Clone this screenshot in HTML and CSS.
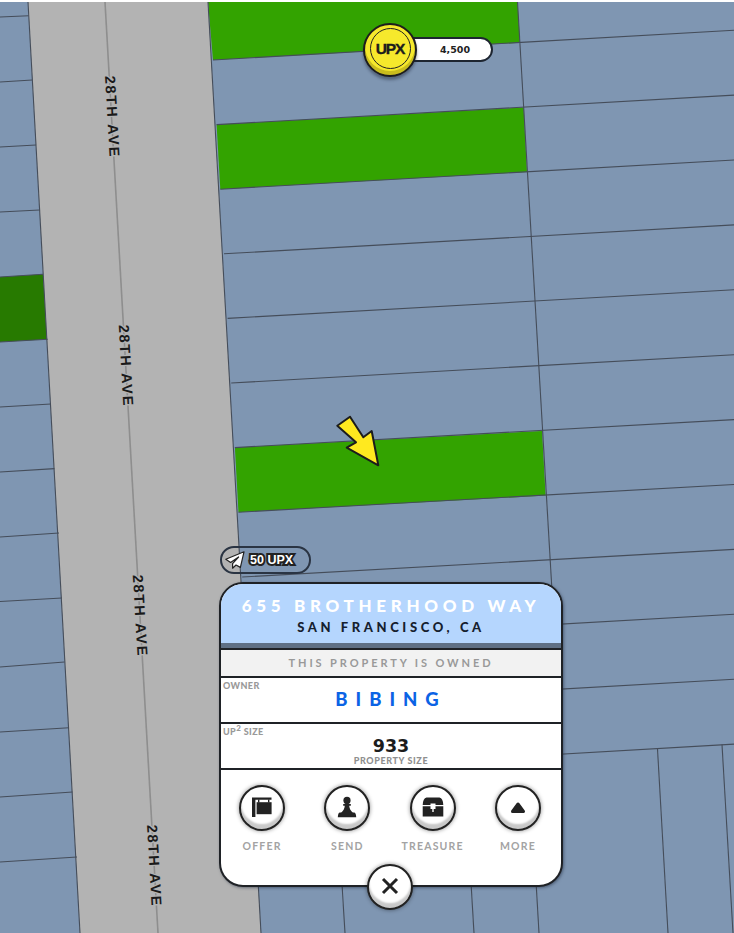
FILE: index.html
```html
<!DOCTYPE html>
<html lang="en">
<head>
  <meta charset="UTF-8" />
  <meta name="viewport" content="width=device-width, initial-scale=1.0"/>
  <title>655 Brotherhood Way</title>
  <link rel="stylesheet" href="styles.css">
</head>
<body>
  <div class="stage">
    <!-- map -->
    <svg class="map" viewBox="0 0 734 933" width="734" height="933">
      <rect class="lot" x="0" y="2" width="734" height="931"/>
      <polygon class="lot-green" points="208,2 517.5,2 520,42.7 213,60"/>
      <polygon class="lot-green" points="216.6,124.6 523.6,107.4 527,172 220.3,189.2"/>
      <polygon class="lot-green" points="234.9,447.6 542,431 545.6,495.6 238.5,512.2"/>
      <polygon class="lot-dark" points="0,277 43,274.3 47.7,339.3 0,342"/>
      <polygon class="road" points="28,2 208,2 261,933 80,933"/>
      <g class="lot-line">
        <line x1="213" y1="60" x2="734" y2="30.2"/>
        <line x1="216.6" y1="124.6" x2="734" y2="95.1"/>
        <line x1="220.3" y1="189.2" x2="734" y2="160"/>
        <line x1="224" y1="253.8" x2="734" y2="224.9"/>
        <line x1="227.6" y1="318.4" x2="734" y2="289.8"/>
        <line x1="231.2" y1="383" x2="734" y2="354.7"/>
        <line x1="234.9" y1="447.6" x2="734" y2="419.6"/>
        <line x1="238.5" y1="512.2" x2="734" y2="484.5"/>
        <line x1="242.2" y1="577" x2="734" y2="549.4"/>
        <line x1="245.9" y1="642" x2="734" y2="614.3"/>
        <line x1="249.5" y1="707" x2="734" y2="679.2"/>
        <line x1="253.2" y1="772" x2="734" y2="744.1"/>
        <line x1="517.5" y1="2" x2="561.5" y2="753"/>
        <line x1="208" y1="2" x2="261" y2="933"/>
        <line x1="28" y1="2" x2="80" y2="933"/>
        <line x1="0" y1="17" x2="28.7" y2="15.7"/>
        <line x1="0" y1="82" x2="32.2" y2="80"/>
        <line x1="0" y1="147" x2="36" y2="145"/>
        <line x1="0" y1="212" x2="39.5" y2="210"/>
        <line x1="0" y1="277" x2="43" y2="274.3"/>
        <line x1="0" y1="342" x2="47.7" y2="339.3"/>
        <line x1="0" y1="407" x2="51" y2="404"/>
        <line x1="0" y1="472" x2="54.5" y2="468.6"/>
        <line x1="0" y1="537" x2="59" y2="533"/>
        <line x1="0" y1="601.5" x2="62" y2="598"/>
        <line x1="0" y1="667" x2="64.5" y2="662"/>
        <line x1="0" y1="732" x2="69" y2="727.7"/>
        <line x1="0" y1="797" x2="72.5" y2="792"/>
        <line x1="0" y1="862" x2="77" y2="857"/>
        <line x1="335" y1="770" x2="345" y2="933"/>
        <line x1="464" y1="765" x2="474" y2="933"/>
        <line x1="529" y1="760" x2="539" y2="933"/>
        <line x1="657.5" y1="749" x2="668" y2="933"/>
        <line x1="722" y1="744.5" x2="733" y2="933"/>
      </g>
      <line class="street-line" x1="105" y1="2" x2="158" y2="933"/>
      <g class="street-names">
        <text transform="translate(112.4 117) rotate(86.75)">28TH AVE</text>
        <text transform="translate(126 366) rotate(86.75)">28TH AVE</text>
        <text transform="translate(140.2 616) rotate(86.75)">28TH AVE</text>
        <text transform="translate(154.4 866) rotate(86.75)">28TH AVE</text>
      </g>
      <polygon class="pointer" points="337.3,425.7 350,416.7 363.3,437.3 371.7,431 378.3,465.3 346.7,447.7 356,442.3"/>
    </svg>

    <!-- balance -->
    <div class="balance">
      <div class="coin"><span class="coin-ring">UPX</span></div>
      <div class="balance-amount">4,500</div>
    </div>

    <!-- send fee -->
    <div class="fee">
      <svg class="fee-icon" viewBox="0 0 20 18" width="20" height="18">
        <path d="M19 .8 L.8 8.2 L5.6 11.4 L13.6 6 L7.6 12.6 L7.6 17.2 L11 14 L15.4 16.4 Z"/>
      </svg>
      <span class="fee-text">50 UPX</span>
    </div>

    <!-- property card -->
    <div class="card">
      <div class="card-head">
        <div class="street">655 BROTHERHOOD WAY</div>
        <div class="city">SAN FRANCISCO, CA</div>
      </div>
      <div class="status">THIS PROPERTY IS OWNED</div>
      <div class="info">
        <div class="info-label">OWNER</div>
        <div class="owner-name">BIBING</div>
      </div>
      <div class="info">
        <div class="info-label">UP<sup>2</sup> SIZE</div>
        <div class="size-value">933</div>
        <div class="size-label">PROPERTY SIZE</div>
      </div>
      <div class="actions">
        <div class="action">
          <div class="round-btn">
            <svg viewBox="0 0 22 22" width="22" height="22">
              <path d="M1 1.5h19.5v2.2H4.4V21H1z"/>
              <path d="M7 3.5h1.4v3H7zM17 3.5h1.4v3H17z"/>
              <rect x="5.6" y="6.2" width="15" height="12"/>
            </svg>
          </div>
          <div class="action-label">OFFER</div>
        </div>
        <div class="action">
          <div class="round-btn">
            <svg viewBox="0 0 22 22" width="22" height="22">
              <circle cx="11" cy="4.4" r="3.6"/>
              <path d="M7.2 8h7.6v1.8h-1.6c.2 3 1.6 5 3.8 7.2H5c2.2-2.2 3.6-4.2 3.8-7.2H7.2z"/>
              <path d="M3.6 16.6h14.8q1.6.6 1.8 4.6H1.8q.2-4 1.8-4.6z"/>
            </svg>
          </div>
          <div class="action-label">SEND</div>
        </div>
        <div class="action">
          <div class="round-btn">
            <svg viewBox="0 0 22 22" width="22" height="22">
              <path d="M4.5 1.5h13q3.5.5 3.8 7.5H13.5V7.4h-5V9H.7Q1 2 4.5 1.5z"/>
              <path d="M.7 10.3h7.8v2.7h1.8v3h1.4v-3h1.8v-2.7h7.8v10.2H.7z"/>
            </svg>
          </div>
          <div class="action-label">TREASURE</div>
        </div>
        <div class="action">
          <div class="round-btn">
            <svg viewBox="0 0 22 22" width="22" height="22">
              <path class="more-up" d="M11 8 L16.5 15.5 H5.5 Z"/>
            </svg>
          </div>
          <div class="action-label">MORE</div>
        </div>
      </div>
      <div class="round-btn close-btn">
        <svg viewBox="0 0 22 22" width="22" height="22">
          <path class="close-x" d="M4 4 L18 18 M18 4 L4 18"/>
        </svg>
      </div>
    </div>
  </div>
</body>
</html>
```

FILE: styles.css
```css
body {
  margin: 0;
  background: #fff;
  font-family: 'Lato', 'Liberation Sans', sans-serif;
}
.stage {
  position: relative;
  width: 734px;
  height: 933px;
  overflow: hidden;
}
.map {
  position: absolute;
  top: 0;
  left: 0;
}
.lot { fill: #7f96b2; }
.lot-green { fill: #33a300; }
.lot-dark { fill: #277a00; }
.road { fill: #b3b3b3; }
.lot-line line {
  stroke: #454d5a;
  stroke-width: 1.1;
}
.street-line {
  stroke: #8e8e8e;
  stroke-width: 1.6;
}
.street-names text {
  font-family: 'Liberation Sans', sans-serif;
  font-size: 14.5px;
  font-weight: bold;
  letter-spacing: 1.9px;
  text-anchor: middle;
  dominant-baseline: central;
  fill: #1a1a1a;
  stroke: #b3b3b3;
  stroke-width: 2.5px;
  paint-order: stroke fill;
}
.pointer {
  fill: #ffe91f;
  stroke: #1c1c1c;
  stroke-width: 2;
  stroke-linejoin: round;
}

/* balance */
.balance {
  position: absolute;
  top: 23px;
  left: 363px;
  display: flex;
  align-items: center;
}
.coin {
  position: relative;
  z-index: 1;
  box-sizing: border-box;
  width: 54px;
  height: 54px;
  display: flex;
  justify-content: center;
  padding-top: 3px;
  border: 2px solid #1d1d1d;
  border-radius: 50%;
  background: #f6e92c;
  box-shadow: inset 0 -4px 0 #c9bc1e, 0 3px 3px rgba(30,40,60,0.45);
}
.coin-ring {
  box-sizing: border-box;
  width: 41px;
  height: 41px;
  display: flex;
  align-items: center;
  justify-content: center;
  border: 1.5px solid #222;
  border-radius: 50%;
  font-family: 'Liberation Sans', sans-serif;
  font-size: 15.5px;
  font-weight: bold;
  letter-spacing: -1.2px;
  color: #1c1c1c;
  -webkit-text-stroke: 0.4px #1c1c1c;
}
.balance-amount {
  box-sizing: border-box;
  width: 84px;
  height: 25px;
  margin-left: -8px;
  margin-bottom: 1px;
  padding-left: 8px;
  display: flex;
  align-items: center;
  justify-content: center;
  border: 2px solid #1d2530;
  border-radius: 0 13px 13px 0;
  background: #fff;
  font-family: 'DejaVu Sans', sans-serif;
  font-size: 9.5px;
  font-weight: bold;
  color: #222;
}

/* send fee */
.fee {
  position: absolute;
  top: 546px;
  left: 220px;
  box-sizing: border-box;
  width: 91px;
  height: 28px;
  padding-left: 3px;
  display: flex;
  align-items: center;
  gap: 5px;
  border: 2px solid #2a3443;
  border-radius: 14px;
}
.fee-icon path {
  fill: #fff;
  stroke: #222;
  stroke-width: 1.2;
  stroke-linejoin: round;
}
.fee-text {
  font-family: 'Liberation Sans', sans-serif;
  font-size: 12.5px;
  font-weight: bold;
  color: #fff;
  -webkit-text-stroke: 4px #222;
  paint-order: stroke fill;
}

/* card */
.card {
  position: absolute;
  top: 582px;
  left: 219px;
  box-sizing: border-box;
  width: 344px;
  height: 305px;
  border: 2px solid #1f2226;
  border-radius: 24px;
  background: #fff;
  box-shadow: 1px 1px 3px rgba(30,40,60,0.5);
}
.card-head {
  box-sizing: border-box;
  height: 66px;
  padding-top: 12px;
  border-radius: 22px 22px 0 0;
  border-bottom: 2px solid #1f2226;
  background: #b5d6fe;
  box-shadow: inset 0 -5px 0 #5f7085;
  text-align: center;
}
.street {
  font-size: 17px;
  font-weight: 900;
  line-height: 20px;
  letter-spacing: 4.67px;
  color: #fff;
}
.city {
  margin-top: 1px;
  font-size: 13px;
  font-weight: 900;
  line-height: 20px;
  letter-spacing: 3.6px;
  color: #16202e;
}
.status {
  height: 26px;
  border-bottom: 2px solid #1f2226;
  background: #f2f2f2;
  font-size: 11px;
  font-weight: bold;
  line-height: 26px;
  letter-spacing: 2.9px;
  text-align: center;
  color: #999;
}
.info {
  position: relative;
  height: 44px;
  border-bottom: 2px solid #1f2226;
  text-align: center;
}
.info-label {
  position: absolute;
  top: 3px;
  left: 2px;
  font-size: 9px;
  font-weight: 900;
  line-height: 10px;
  letter-spacing: 0.4px;
  color: #999;
}
.info-label sup {
  font-size: 8px;
  line-height: 0;
}
.owner-name {
  padding-top: 10px;
  font-size: 18.5px;
  font-weight: 900;
  line-height: 22px;
  letter-spacing: 8px;
  color: #0b63e5;
}
.size-value {
  padding-top: 13px;
  font-family: 'DejaVu Sans', sans-serif;
  font-size: 17.5px;
  font-weight: bold;
  line-height: 18px;
  color: #1c1c1c;
}
.size-label {
  margin-top: 1px;
  font-size: 9px;
  font-weight: 900;
  line-height: 10px;
  letter-spacing: 0.6px;
  color: #8f8f8f;
}

/* actions */
.actions {
  display: grid;
  grid-template-columns: repeat(4, 85.3px);
  justify-content: center;
  padding: 15px 2px 0 0;
}
.action {
  display: flex;
  flex-direction: column;
  align-items: center;
  gap: 9px;
}
.round-btn {
  box-sizing: border-box;
  width: 46px;
  height: 46px;
  display: flex;
  align-items: center;
  justify-content: center;
  padding-bottom: 2px;
  border: 2px solid #222;
  border-radius: 50%;
  background: #fff;
  box-shadow: inset 0 -5px 2px #c9c9c9, 0 0 4px rgba(0,0,0,0.45);
}
.round-btn svg { fill: #222; }
.more-up {
  stroke: #222;
  stroke-width: 3;
  stroke-linejoin: round;
}
.action-label {
  font-size: 10.5px;
  font-weight: bold;
  line-height: 12px;
  letter-spacing: 1.2px;
  color: #a3a3a3;
}
.close-btn {
  position: absolute;
  left: 146px;
  bottom: -25px;
}
.close-x {
  fill: none;
  stroke: #222;
  stroke-width: 3;
}
```
